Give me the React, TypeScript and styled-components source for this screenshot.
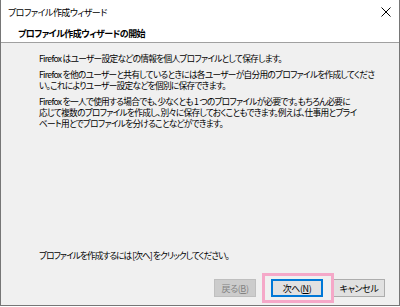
import styled, { createGlobalStyle } from "styled-components";

const GlobalStyle = createGlobalStyle`
  html, body {
    margin: 0;
    padding: 0;
    background: #ffffff;
  }
  body {
    font-family: "Noto Sans CJK JP", "Noto Sans", sans-serif;
  }
`;

const Window = styled.div`
  width: 400px;
  height: 306px;
  box-sizing: border-box;
  display: flex;
  flex-direction: column;
  border: 1px solid #767676;
  border-top: none;
  background: #ffffff;
  color: #000000;
  font-size: 9px;
  letter-spacing: -0.55px;
  font-feature-settings: "palt";
`;

const TitleBar = styled.div`
  height: 24px;
  display: flex;
  align-items: center;
  justify-content: space-between;
  padding: 0 8px 0 7px;
`;

const TitleText = styled.span`
  line-height: 11px;
`;

const CloseIcon = styled.svg`
  width: 10px;
  height: 10px;
`;

const Header = styled.div`
  height: 18px;
  display: flex;
  align-items: center;
  padding-left: 17px;
  border-bottom: 1px solid #a0a0a0;
  font-weight: 700;
`;

const Body = styled.div`
  flex: 1;
  display: flex;
  flex-direction: column;
  background: #f0f0f0;
  padding: 10px 14px 8px 38px;
  font-size: 8.7px;
  letter-spacing: -0.72px;
`;

const Paragraph = styled.p`
  margin: 0 0 5px 0;
  line-height: 11px;
  white-space: nowrap;
`;

const Spacer = styled.div`
  flex: 1;
`;

const Hint = styled.p`
  margin: 0 0 18px 0;
  line-height: 11px;
  white-space: nowrap;
  letter-spacing: -0.95px;
`;

const ButtonRow = styled.div`
  display: flex;
  justify-content: flex-end;
  align-items: center;
`;

const Button = styled.button<{ $disabled?: boolean; $focused?: boolean; $w: number }>`
  width: ${(p) => p.$w}px;
  height: 18px;
  box-sizing: border-box;
  margin: 0;
  padding: 0;
  font-family: inherit;
  font-size: 9px;
  letter-spacing: -0.4px;
  font-feature-settings: "palt";
  line-height: 1;
  color: ${(p) => (p.$disabled ? "#838383" : "#000000")};
  background: ${(p) => (p.$disabled ? "#cccccc" : "#e1e1e1")};
  border: ${(p) =>
    p.$focused ? "2px solid #0078d7" : p.$disabled ? "1px solid #bfbfbf" : "1px solid #adadad"};
  u {
    text-decoration-thickness: 1px;
    text-underline-offset: 1px;
  }
`;

const Highlight = styled.div`
  position: relative;
  display: flex;
  margin-left: 15px;
  &::after {
    content: "";
    position: absolute;
    left: -9px;
    right: -11px;
    top: -6px;
    bottom: -6px;
    border: 3px solid #f5a8c8;
    pointer-events: none;
  }
`;

const CancelWrap = styled.div`
  display: flex;
  margin-left: 10px;
`;

export default function App() {
  return (
    <>
      <GlobalStyle />
      <Window>
        <TitleBar>
          <TitleText>プロファイル作成ウィザード</TitleText>
          <CloseIcon viewBox="0 0 10 10">
            <path d="M0.5 0.5 L9.5 9.5 M9.5 0.5 L0.5 9.5" stroke="#000" strokeWidth="1" />
          </CloseIcon>
        </TitleBar>
        <Header>プロファイル作成ウィザードの開始</Header>
        <Body>
          <Paragraph>Firefox はユーザー設定などの情報を個人プロファイルとして保存します。</Paragraph>
          <Paragraph>
            Firefox を他のユーザーと共有しているときには各ユーザーが自分用のプロファイルを作成してくださ
            <br />
            い。これによりユーザー設定などを個別に保存できます。
          </Paragraph>
          <Paragraph>
            Firefox を一人で使用する場合でも、少なくとも 1 つのプロファイルが必要です。もちろん必要に
            <br />
            応じて複数のプロファイルを作成し、別々に保存しておくこともできます。例えば、仕事用とプライ
            <br />
            ベート用とでプロファイルを分けることなどができます。
          </Paragraph>
          <Spacer />
          <Hint>プロファイルを作成するには [次へ] をクリックしてください。</Hint>
          <ButtonRow>
            <Button $disabled $w={42} disabled>
              戻る(<u>B</u>)
            </Button>
            <Highlight>
              <Button $focused $w={52}>
                次へ(<u>N</u>)
              </Button>
            </Highlight>
            <CancelWrap>
              <Button $w={52}>キャンセル</Button>
            </CancelWrap>
          </ButtonRow>
        </Body>
      </Window>
    </>
  );
}
